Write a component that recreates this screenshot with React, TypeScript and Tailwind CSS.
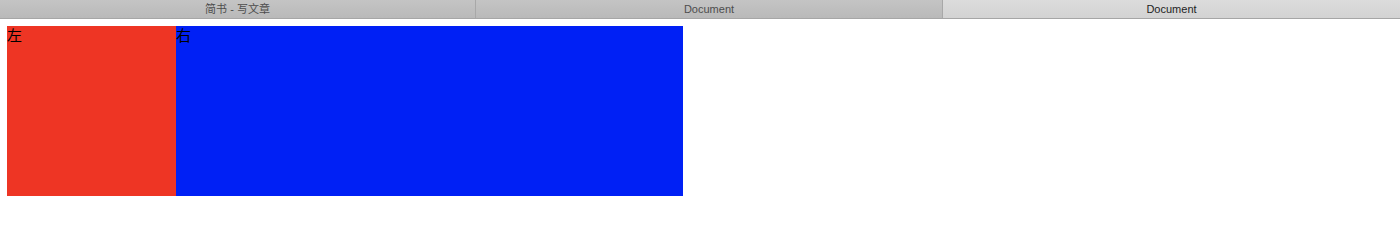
export default function App() {
  const sans = { fontFamily: '"Liberation Sans", "Noto Sans CJK SC", sans-serif' };
  return (
    <div className="w-[1400px] h-[233px] bg-white">
      <div
        className="flex h-[19px] border-b border-[#a6a6a6] text-[11px] leading-[18px]"
        style={sans}
      >
        <div className="w-[476px] border-r border-[#a8a8a8] bg-gradient-to-b from-[#c4c4c4] to-[#b9b9b9] text-center text-[#4d4d4d]">
          简书 - 写文章
        </div>
        <div className="w-[467px] border-r border-[#a8a8a8] bg-gradient-to-b from-[#c4c4c4] to-[#b9b9b9] text-center text-[#4d4d4d]">
          Document
        </div>
        <div className="flex-1 bg-gradient-to-b from-[#dcdcdc] to-[#d3d3d3] text-center text-[#1e1e1e]">
          Document
        </div>
      </div>
      <div
        className="flex pl-[7px] pt-[7px] text-[15px] leading-[21px] text-black"
        style={{ fontFamily: '"Liberation Serif", "Noto Sans CJK SC", serif' }}
      >
        <div className="w-[169px] h-[170px] bg-[#ee3524]">左</div>
        <div className="w-[507px] h-[170px] bg-[#0020f5]">右</div>
      </div>
    </div>
  );
}
